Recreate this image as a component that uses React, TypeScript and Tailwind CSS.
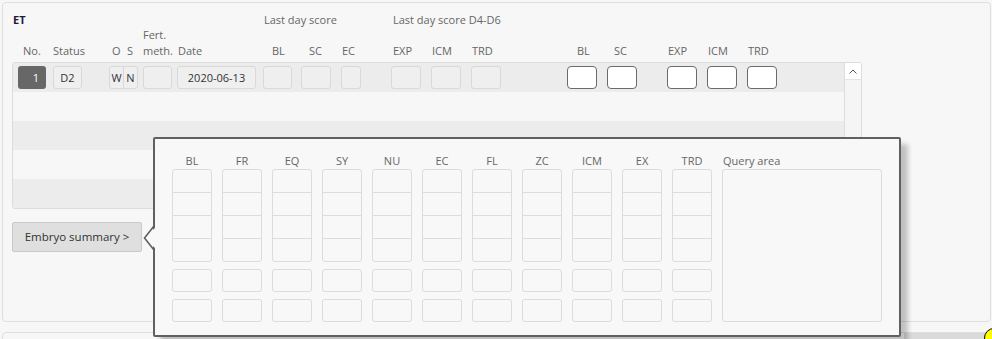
import React from 'react';

const labelCls = 'text-[#666]';

// header labels: [text, width]
const headLabels: Array<[string, number]> = [
  ['No.', 30],
  ['Status', 59],
  ['O', 15],
  ['S', 16],
  ['', 35],
  ['Date', 94],
  ['BL', 37],
  ['SC', 33],
  ['EC', 51],
  ['EXP', 39],
  ['ICM', 40],
  ['TRD', 105],
  ['BL', 37],
  ['SC', 54],
  ['EXP', 40],
  ['ICM', 40],
  ['TRD', 40],
];

const popupCols = ['BL', 'FR', 'EQ', 'SY', 'NU', 'EC', 'FL', 'ZC', 'ICM', 'EX', 'TRD'];

const greyCell = 'h-[23px] bg-[#efefef] border border-[#d9d9d9] rounded-[3px]';
const whiteCell = 'h-[23px] w-[30px] bg-white border border-[#6b6b6b] rounded-[4px]';
const popCell = 'border border-[#dcdcdc] rounded-[3px]';

const FirstRow = () => (
  <div className="flex items-center h-[29px] bg-[#ececec] text-[#333]">
    <div className="ml-[5px] w-[28px] h-[23px] bg-[#676767] rounded-[3px] text-white text-right pr-[7px] leading-[23px]">
      1
    </div>
    <div className={`ml-[7px] w-[29px] text-center leading-[21px] ${greyCell}`}>D2</div>
    <div className={`ml-[27px] w-[29px] flex leading-[21px] ${greyCell}`}>
      <div className="w-[14px] text-center border-r border-[#d9d9d9]">W</div>
      <div className="flex-1 text-center">N</div>
    </div>
    <div className={`ml-[5px] w-[29px] ${greyCell}`} />
    <div className={`ml-[5px] w-[79px] text-center leading-[21px] ${greyCell}`}>2020-06-13</div>
    <div className={`ml-[7px] w-[29px] ${greyCell}`} />
    <div className={`ml-[9px] w-[30px] ${greyCell}`} />
    <div className={`ml-[10px] w-[20px] ${greyCell}`} />
    <div className={`ml-[30px] w-[30px] ${greyCell}`} />
    <div className={`ml-[10px] w-[30px] ${greyCell}`} />
    <div className={`ml-[10px] w-[30px] ${greyCell}`} />
    <div className={`ml-[66px] ${whiteCell}`} />
    <div className={`ml-[10px] ${whiteCell}`} />
    <div className={`ml-[30px] ${whiteCell}`} />
    <div className={`ml-[10px] ${whiteCell}`} />
    <div className={`ml-[10px] ${whiteCell}`} />
  </div>
);

const Popup = () => (
  <div className="absolute left-[153px] top-[137px] w-[748px] h-[200px] border-2 border-[#606060] rounded-[2px] bg-[#f8f8f8] shadow-[7px_7px_5px_rgba(0,0,0,0.22)]">
    {/* pointer toward the button */}
    <svg className="absolute left-[-12px] top-[87px]" width="13" height="24" viewBox="0 0 13 24">
      <polygon points="13,1 1.5,12 13,23" fill="#f8f8f8" />
      <polyline points="11,0 1.5,12 11,24" fill="none" stroke="#606060" strokeWidth="1.6" />
    </svg>
    <div className="flex gap-[10px] pl-[17px] pt-[14px]">
      {popupCols.map((col, i) => (
        <div key={i} className="w-[40px] flex flex-col">
          <div className={`h-[16px] leading-[16px] text-center ${labelCls}`}>{col}</div>
          <div className={`h-[93px] flex flex-col ${popCell}`}>
            <div className="h-[22px]" />
            <div className="h-[23px] border-t border-[#dcdcdc]" />
            <div className="h-[23px] border-t border-[#dcdcdc]" />
            <div className="h-[23px] border-t border-[#dcdcdc]" />
          </div>
          <div className={`mt-[7px] h-[23px] ${popCell}`} />
          <div className={`mt-[7px] h-[23px] ${popCell}`} />
        </div>
      ))}
      <div className="w-[160px] flex flex-col">
        <div className={`h-[16px] leading-[16px] pl-[1px] ${labelCls}`}>Query area</div>
        <div className={`h-[153px] ${popCell}`} />
      </div>
    </div>
  </div>
);

export default function App() {
  return (
    <div className="relative w-[992px] h-[339px] overflow-hidden bg-[#f7f7f7] pt-[2px] pl-[2px] text-[11px] font-['Open_Sans',sans-serif]">
      <div className="w-[989px] h-[320px] border border-[#dedede] rounded-[4px] pl-[9px] pt-[9px]">
        <div className="pl-[1px] leading-[16px]">
          <div className="flex h-[15px]">
            <div className="w-[251px] font-bold text-[#1b1b3a]">ET</div>
            <div className={`w-[129px] ${labelCls}`}>Last day score</div>
            <div className={labelCls}>Last day score D4-D6</div>
          </div>
          <div className="flex items-end h-[32px]">
            <div className="w-[10px]" />
            {headLabels.map(([text, w], i) => (
              <div key={i} className={labelCls} style={{ width: w }}>
                {i === 4 ? (
                  <>
                    Fert.
                    <br />
                    meth.
                  </>
                ) : (
                  text
                )}
              </div>
            ))}
          </div>
        </div>

        <div className="mt-[3px] w-[850px] h-[147px] border border-[#dcdcdc] rounded-[3px] flex overflow-hidden">
          <div className="flex-1 flex flex-col">
            <FirstRow />
            <div className="h-[29px] bg-[#f7f7f7]" />
            <div className="h-[29px] bg-[#ececec]" />
            <div className="h-[29px] bg-[#f7f7f7]" />
            <div className="h-[29px] bg-[#ececec]" />
          </div>
          <div className="w-[17px] border-l border-[#dcdcdc] bg-[#f5f5f5] flex flex-col">
            <div className="h-[17px] bg-white border-b border-[#e3e3e3] flex items-center justify-center">
              <svg width="8" height="5" viewBox="0 0 8 5">
                <polyline points="0.5,4.5 4,1 7.5,4.5" fill="none" stroke="#555" strokeWidth="1" />
              </svg>
            </div>
          </div>
        </div>

        <button className="mt-[13px] w-[130px] h-[30px] bg-[#dfdfdf] border border-[#c9c9c9] rounded-[2px] text-[#333] text-[11.5px]">
          Embryo summary &gt;
        </button>
      </div>

      <div className="mt-[10px] w-[989px] h-[20px] border border-[#dedede] rounded-[4px] flex justify-end">
        <div className="w-[82px] mr-[4px] bg-[#dadada]" />
      </div>

      <Popup />

      <div className="absolute left-[984px] top-[328px] w-[20px] h-[20px] rounded-full bg-[#ffff00] border border-black" />
    </div>
  );
}
